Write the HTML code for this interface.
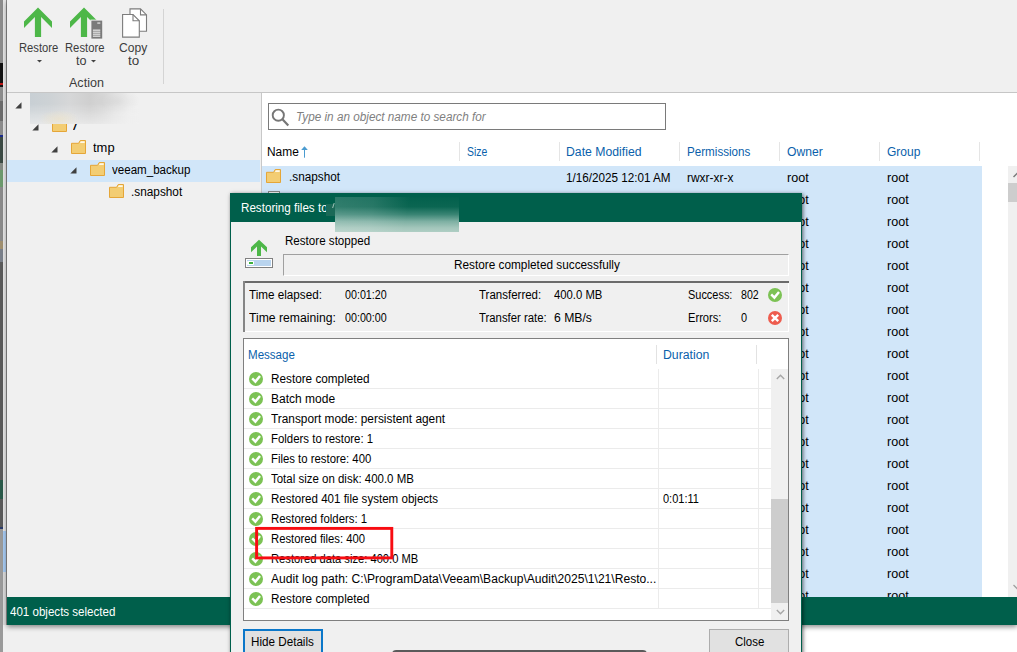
<!DOCTYPE html>
<html><head><meta charset="utf-8"><title>Restore</title>
<style>
html,body{margin:0;padding:0;}
body{width:1017px;height:652px;position:relative;overflow:hidden;background:#f0f0f0;font-family:'Liberation Sans', sans-serif;font-size:12px;}
.a{position:absolute;display:block;}
.t{position:absolute;white-space:pre;transform-origin:0 0;line-height:normal;}
</style></head><body>
<!-- desktop strip on the left -->
<div class="a" style="left:0;top:0;width:3px;height:652px;background:linear-gradient(#8c8c8c 0px,#8c8c8c 63px,#111 63px,#111 83px,#c01818 83px,#c01818 85px,#111 85px,#111 87px,#8c8c8c 87px,#8c8c8c 101px,#6c6c6c 101px,#6c6c6c 121px,#8c8c8c 121px,#8c8c8c 135.5px,#1c2c8c 135.5px,#1c2c8c 137px,#3c4a44 137px,#3c4a44 163px,#858a85 163px,#858a85 170px,#6d9a6d 170px,#6d9a6d 187px,#8a8a8a 187px,#8a8a8a 241px,#a09070 241px,#a09070 249px,#7a808a 249px,#7a808a 262px,#5a5a5a 262px,#5a5a5a 480px,#2a5a4a 480px,#2a5a4a 499.5px,#5a5a5a 499.5px,#5a5a5a 527px,#2a3a6a 527px,#2a3a6a 528.5px,#9a9a9a 528.5px,#9a9a9a 652px)"></div>
<div class="a" style="left:2.6px;top:0;width:3.6px;height:652px;background:linear-gradient(#e6e6e6 0,#e6e6e6 531px,#a8ccf4 531px,#a8ccf4 572px,#dcdcdc 572px,#dcdcdc 652px)"></div>
<div class="a" style="left:6px;top:0;width:1px;height:625px;background:#8e8e8e"></div>
<!-- area under main window -->
<div class="a" style="left:3px;top:625px;width:800px;height:27px;background:#f0f0f0"></div>
<div class="a" style="left:802px;top:625px;width:215px;height:27px;background:#fff"></div>
<!-- main window -->
<div class="a" style="left:7px;top:0;width:1010px;height:625px;background:#f0f0f0;box-shadow:0 2px 5px rgba(0,0,0,.45)"></div>
<div class="a" style="left:7px;top:92px;width:1010px;height:1px;background:#c6c6c6"></div>
<div class="a" style="left:163px;top:9px;width:1px;height:75px;background:#d4d4d4"></div>
<!-- tree selected row -->
<div class="a" style="left:7px;top:159.5px;width:253px;height:22px;background:#d1e6f9"></div>
<!-- right pane -->
<div class="a" style="left:261px;top:93px;width:756px;height:504px;background:#fff;border-left:1px solid #c8c8c8"></div>
<div class="a" style="left:268px;top:103px;width:396px;height:25px;border:1px solid #7a7a7a;background:#fff"></div>
<div class="a" style="left:262px;top:166px;width:720px;height:431px;background:#d1e6f9"></div>
<!-- header separators -->
<div class="a" style="left:459px;top:142px;width:1px;height:19px;background:#e5e5e5"></div><div class="a" style="left:559px;top:142px;width:1px;height:19px;background:#e5e5e5"></div><div class="a" style="left:679px;top:142px;width:1px;height:19px;background:#e5e5e5"></div><div class="a" style="left:779px;top:142px;width:1px;height:19px;background:#e5e5e5"></div><div class="a" style="left:879px;top:142px;width:1px;height:19px;background:#e5e5e5"></div><div class="a" style="left:979px;top:142px;width:1px;height:19px;background:#e5e5e5"></div>
<!-- second row file icon peek -->
<div class="a" style="left:268px;top:191px;width:10px;height:4px;border:1px solid #8a8a8a;background:#fff"></div>
<!-- main scrollbar -->
<div class="a" style="left:1008px;top:166px;width:9px;height:431px;background:#f0f0f0"></div>
<div class="a" style="left:1008px;top:183px;width:9px;height:19px;background:#cdcdcd"></div>
<svg class="a" style="left:1012.5px;top:172px" width="8" height="6" viewBox="0 0 8 6"><path d="M0.5 5L4 1.5L7.5 5" fill="none" stroke="#7a7a7a" stroke-width="1.5"/></svg>
<svg class="a" style="left:1012.5px;top:584px" width="8" height="6" viewBox="0 0 8 6"><path d="M0.5 1L4 4.5L7.5 1" fill="none" stroke="#a0a0a0" stroke-width="1.3"/></svg>
<svg class="a" style="left:23px;top:7px" width="30" height="31" viewBox="0 0 30 31"><path d="M15 0.4L29 14.4V21L18.1 10.1V30H11.9V10.1L1 21V14.4Z" fill="#4db748"/></svg><svg class="a" style="left:68.8px;top:7px" width="30" height="31" viewBox="0 0 30 31"><path d="M15 0.4L29 14.4V21L18.1 10.1V30H11.9V10.1L1 21V14.4Z" fill="#4db748"/></svg><svg class="a" style="left:90px;top:19px" width="14" height="21" viewBox="0 0 14 21"><rect x="0.4" y="0.6" width="12.8" height="20" fill="#f0f0f0"/><rect x="1.4" y="1.6" width="10.8" height="18" fill="#7a7a7a"/><rect x="7.3" y="3.5" width="3" height="1.1" fill="#f0f0f0"/><rect x="2.9" y="10.6" width="7.4" height="1.1" fill="#f6f6f6"/><rect x="2.9" y="12.6" width="7.4" height="1.1" fill="#f6f6f6"/><rect x="2.9" y="14.6" width="7.4" height="1.1" fill="#f6f6f6"/><rect x="2.9" y="16.6" width="7.4" height="1.1" fill="#f6f6f6"/></svg><svg class="a" style="left:122px;top:8px" width="26" height="30" viewBox="0 0 26 30"><path d="M8 0.9H18.5L24.5 6.9V23.2H8Z" fill="#fff" stroke="#7c7c7c" stroke-width="1.1"/><path d="M18.5 0.9V6.9H24.5" fill="none" stroke="#7c7c7c" stroke-width="1.1"/><path d="M0.6 6.5H11L17.3 12.8V29.1H0.6Z" fill="#fff" stroke="#7c7c7c" stroke-width="1.1"/><path d="M11 6.5V12.8H17.3" fill="none" stroke="#7c7c7c" stroke-width="1.1"/></svg><svg class="a" style="left:37.3px;top:60.2px" width="5" height="3" viewBox="0 0 5 3"><path d="M0 0H5L2.5 2.6Z" fill="#444"/></svg><svg class="a" style="left:91.4px;top:60.2px" width="5" height="3" viewBox="0 0 5 3"><path d="M0 0H5L2.5 2.6Z" fill="#444"/></svg><svg class="a" style="left:14.6px;top:101.7px" width="7" height="7" viewBox="0 0 7 7"><path d="M6.5 0.3V6.5H0.3Z" fill="#404040"/></svg><svg class="a" style="left:31.6px;top:123.7px" width="7" height="7" viewBox="0 0 7 7"><path d="M6.5 0.3V6.5H0.3Z" fill="#404040"/></svg><svg class="a" style="left:50.6px;top:145.5px" width="7" height="7" viewBox="0 0 7 7"><path d="M6.5 0.3V6.5H0.3Z" fill="#404040"/></svg><svg class="a" style="left:69.6px;top:167.3px" width="7" height="7" viewBox="0 0 7 7"><path d="M6.5 0.3V6.5H0.3Z" fill="#404040"/></svg><svg class="a" style="left:52px;top:118px" width="15" height="14" viewBox="0 0 15 14"><path d="M0.5 3.3H7.6L9.2 0.5H14.5V13.5H0.5Z" fill="#f3cd73" stroke="#e5a638" stroke-width="1"/><path d="M9.8 1.3H13.7V2.9H8.9Z" fill="#fff8e8"/></svg><svg class="a" style="left:71px;top:140px" width="15" height="14" viewBox="0 0 15 14"><path d="M0.5 3.3H7.6L9.2 0.5H14.5V13.5H0.5Z" fill="#f3cd73" stroke="#e5a638" stroke-width="1"/><path d="M9.8 1.3H13.7V2.9H8.9Z" fill="#fff8e8"/></svg><svg class="a" style="left:90px;top:162px" width="15" height="14" viewBox="0 0 15 14"><path d="M0.5 3.3H7.6L9.2 0.5H14.5V13.5H0.5Z" fill="#f3cd73" stroke="#e5a638" stroke-width="1"/><path d="M9.8 1.3H13.7V2.9H8.9Z" fill="#fff8e8"/></svg><svg class="a" style="left:109px;top:184px" width="15" height="14" viewBox="0 0 15 14"><path d="M0.5 3.3H7.6L9.2 0.5H14.5V13.5H0.5Z" fill="#f3cd73" stroke="#e5a638" stroke-width="1"/><path d="M9.8 1.3H13.7V2.9H8.9Z" fill="#fff8e8"/></svg><svg class="a" style="left:266px;top:169px" width="15" height="14" viewBox="0 0 15 14"><path d="M0.5 3.3H7.6L9.2 0.5H14.5V13.5H0.5Z" fill="#f3cd73" stroke="#e5a638" stroke-width="1"/><path d="M9.8 1.3H13.7V2.9H8.9Z" fill="#fff8e8"/></svg><svg class="a" style="left:270px;top:107px" width="20" height="20" viewBox="0 0 20 20"><circle cx="8.3" cy="8.2" r="5.6" fill="none" stroke="#767676" stroke-width="1.9"/><path d="M12.4 12.3L18.3 18.4" stroke="#767676" stroke-width="2.2" fill="none"/></svg><svg class="a" style="left:301px;top:146px" width="7" height="12" viewBox="0 0 7 12"><path d="M3.5 0.3L6.8 4H0.2Z" fill="#4a9bd0"/><path d="M3.5 3V11.7" stroke="#4a9bd0" stroke-width="1"/></svg>
<span class="t" style="left:18.9px;top:41.0px;color:#3c3c3c;transform:scaleX(0.9350)">Restore</span>
<span class="t" style="left:64.8px;top:41.0px;color:#3c3c3c;transform:scaleX(0.9374)">Restore</span>
<span class="t" style="left:76.0px;top:53.5px;color:#3c3c3c;transform:scaleX(1.0484)">to</span>
<span class="t" style="left:118.8px;top:41.0px;color:#3c3c3c;transform:scaleX(1.0066)">Copy</span>
<span class="t" style="left:127.6px;top:53.5px;color:#3c3c3c;transform:scaleX(1.1183)">to</span>
<span class="t" style="left:68.9px;top:75.7px;color:#3c3c3c;transform:scaleX(1.0462)">Action</span>
<span class="t" style="left:73.3px;top:119.0px;color:#000;transform:scaleX(1.4654)">/</span>
<span class="t" style="left:93.1px;top:141.0px;color:#000;transform:scaleX(1.0792)">tmp</span>
<span class="t" style="left:112.2px;top:163.0px;color:#000;transform:scaleX(0.9645)">veeam_backup</span>
<span class="t" style="left:130.8px;top:185.0px;color:#000;transform:scaleX(0.9837)">.snapshot</span>
<span class="t" style="left:296.3px;top:110.0px;color:#808080;font-style:italic;transform:scaleX(0.9784)">Type in an object name to search for</span>
<span class="t" style="left:266.9px;top:145.0px;color:#000;transform:scaleX(0.9933)">Name</span>
<span class="t" style="left:466.7px;top:145.0px;color:#0a5fab;transform:scaleX(0.8696)">Size</span>
<span class="t" style="left:566.3px;top:145.0px;color:#0a5fab;transform:scaleX(1.0196)">Date Modified</span>
<span class="t" style="left:686.8px;top:145.0px;color:#0a5fab;transform:scaleX(0.9700)">Permissions</span>
<span class="t" style="left:786.5px;top:145.0px;color:#0a5fab;transform:scaleX(1.0101)">Owner</span>
<span class="t" style="left:886.5px;top:145.0px;color:#0a5fab;transform:scaleX(1.0012)">Group</span>
<span class="t" style="left:288.8px;top:170.0px;color:#000;transform:scaleX(0.9818)">.snapshot</span>
<span class="t" style="left:566.3px;top:171.0px;color:#000;transform:scaleX(0.9737)">1/16/2025 12:01 AM</span>
<span class="t" style="left:686.8px;top:171.0px;color:#000;transform:scaleX(0.9945)">rwxr-xr-x</span>
<span class="t" style="left:786.5px;top:171.0px;color:#000;transform:scaleX(1.0489)">root</span>
<span class="t" style="left:886.5px;top:171.0px;color:#000;transform:scaleX(1.0489)">root</span>
<span class="t" style="left:786.5px;top:193.0px;color:#000;transform:scaleX(1.0489)">root</span>
<span class="t" style="left:886.5px;top:193.0px;color:#000;transform:scaleX(1.0489)">root</span>
<span class="t" style="left:786.5px;top:215.0px;color:#000;transform:scaleX(1.0489)">root</span>
<span class="t" style="left:886.5px;top:215.0px;color:#000;transform:scaleX(1.0489)">root</span>
<span class="t" style="left:786.5px;top:237.0px;color:#000;transform:scaleX(1.0489)">root</span>
<span class="t" style="left:886.5px;top:237.0px;color:#000;transform:scaleX(1.0489)">root</span>
<span class="t" style="left:786.5px;top:259.0px;color:#000;transform:scaleX(1.0489)">root</span>
<span class="t" style="left:886.5px;top:259.0px;color:#000;transform:scaleX(1.0489)">root</span>
<span class="t" style="left:786.5px;top:281.0px;color:#000;transform:scaleX(1.0489)">root</span>
<span class="t" style="left:886.5px;top:281.0px;color:#000;transform:scaleX(1.0489)">root</span>
<span class="t" style="left:786.5px;top:303.0px;color:#000;transform:scaleX(1.0489)">root</span>
<span class="t" style="left:886.5px;top:303.0px;color:#000;transform:scaleX(1.0489)">root</span>
<span class="t" style="left:786.5px;top:325.0px;color:#000;transform:scaleX(1.0489)">root</span>
<span class="t" style="left:886.5px;top:325.0px;color:#000;transform:scaleX(1.0489)">root</span>
<span class="t" style="left:786.5px;top:347.0px;color:#000;transform:scaleX(1.0489)">root</span>
<span class="t" style="left:886.5px;top:347.0px;color:#000;transform:scaleX(1.0489)">root</span>
<span class="t" style="left:786.5px;top:369.0px;color:#000;transform:scaleX(1.0489)">root</span>
<span class="t" style="left:886.5px;top:369.0px;color:#000;transform:scaleX(1.0489)">root</span>
<span class="t" style="left:786.5px;top:391.0px;color:#000;transform:scaleX(1.0489)">root</span>
<span class="t" style="left:886.5px;top:391.0px;color:#000;transform:scaleX(1.0489)">root</span>
<span class="t" style="left:786.5px;top:413.0px;color:#000;transform:scaleX(1.0489)">root</span>
<span class="t" style="left:886.5px;top:413.0px;color:#000;transform:scaleX(1.0489)">root</span>
<span class="t" style="left:786.5px;top:435.0px;color:#000;transform:scaleX(1.0489)">root</span>
<span class="t" style="left:886.5px;top:435.0px;color:#000;transform:scaleX(1.0489)">root</span>
<span class="t" style="left:786.5px;top:457.0px;color:#000;transform:scaleX(1.0489)">root</span>
<span class="t" style="left:886.5px;top:457.0px;color:#000;transform:scaleX(1.0489)">root</span>
<span class="t" style="left:786.5px;top:479.0px;color:#000;transform:scaleX(1.0489)">root</span>
<span class="t" style="left:886.5px;top:479.0px;color:#000;transform:scaleX(1.0489)">root</span>
<span class="t" style="left:786.5px;top:501.0px;color:#000;transform:scaleX(1.0489)">root</span>
<span class="t" style="left:886.5px;top:501.0px;color:#000;transform:scaleX(1.0489)">root</span>
<span class="t" style="left:786.5px;top:523.0px;color:#000;transform:scaleX(1.0489)">root</span>
<span class="t" style="left:886.5px;top:523.0px;color:#000;transform:scaleX(1.0489)">root</span>
<span class="t" style="left:786.5px;top:545.0px;color:#000;transform:scaleX(1.0489)">root</span>
<span class="t" style="left:886.5px;top:545.0px;color:#000;transform:scaleX(1.0489)">root</span>
<span class="t" style="left:786.5px;top:567.0px;color:#000;transform:scaleX(1.0489)">root</span>
<span class="t" style="left:886.5px;top:567.0px;color:#000;transform:scaleX(1.0489)">root</span>
<span class="t" style="left:786.5px;top:589.0px;color:#000;transform:scaleX(1.0489)">root</span>
<span class="t" style="left:886.5px;top:589.0px;color:#000;transform:scaleX(1.0489)">root</span>
<!-- blurred host name in tree -->
<div class="a" style="left:30px;top:92.5px;width:109px;height:31.5px;background:radial-gradient(ellipse 20px 9px at 29px 26px,rgba(238,226,196,.6),rgba(238,224,190,0)),linear-gradient(180deg,rgba(240,240,240,0) 0,rgba(240,240,240,0) 35%,rgba(240,240,240,.72) 100%),radial-gradient(ellipse 22px 12px at 88px 8px,rgba(0,0,0,.045),rgba(0,0,0,0)),linear-gradient(90deg,#c8cfd4 0,#cdd2d5 18%,#d6d7d8 36%,#cfcfcf 55%,#d6d6d6 66%,#e4e4e4 78%,#eeeeee 90%,#f0f0f0 100%)"></div>
<!-- status bar -->
<div class="a" style="left:7px;top:597px;width:1010px;height:28px;background:#005f4b"></div>
<span class="t" style="left:10.3px;top:605.0px;color:#fff;transform:scaleX(0.9634)">401 objects selected</span>
<!-- dialog -->
<div class="a" style="left:230px;top:193px;width:570px;height:470px;background:#f0f0f0;border:1px solid #005f4b;box-shadow:1px 1px 4px rgba(0,0,0,.6)"></div>
<div class="a" style="left:230px;top:193px;width:572px;height:29px;background:#005f4b"></div>
<!-- progress box -->
<div class="a" style="left:283px;top:254px;width:505px;height:21px;border-top:1px solid #a0a0a0;border-left:1px solid #a0a0a0;border-right:1px solid #fff;border-bottom:1px solid #fff;box-sizing:border-box;width:506px;height:22px"></div>
<!-- stats panel -->
<div class="a" style="left:243px;top:281px;width:546px;height:2px;background:#6b6b6b"></div><div class="a" style="left:243px;top:281px;width:2px;height:50.6px;background:#858585"></div><div class="a" style="left:788px;top:283px;width:1px;height:48.6px;background:#fff"></div><div class="a" style="left:245px;top:330.6px;width:544px;height:1px;background:#fff"></div>
<!-- list box -->
<div class="a" style="left:243px;top:338px;width:546px;height:283px;box-sizing:border-box;background:#fff;border:1px solid #7f7f7f"></div>
<div class="a" style="left:656px;top:345px;width:1px;height:19px;background:#e2e2e2"></div>
<div class="a" style="left:756px;top:345px;width:1px;height:19px;background:#e2e2e2"></div>
<div class="a" style="left:244px;top:388px;width:527px;height:1px;background:#ebebeb"></div><div class="a" style="left:244px;top:408px;width:527px;height:1px;background:#ebebeb"></div><div class="a" style="left:244px;top:428px;width:527px;height:1px;background:#ebebeb"></div><div class="a" style="left:244px;top:448px;width:527px;height:1px;background:#ebebeb"></div><div class="a" style="left:244px;top:468px;width:527px;height:1px;background:#ebebeb"></div><div class="a" style="left:244px;top:488px;width:527px;height:1px;background:#ebebeb"></div><div class="a" style="left:244px;top:508px;width:527px;height:1px;background:#ebebeb"></div><div class="a" style="left:244px;top:528px;width:527px;height:1px;background:#ebebeb"></div><div class="a" style="left:244px;top:548px;width:527px;height:1px;background:#ebebeb"></div><div class="a" style="left:244px;top:568px;width:527px;height:1px;background:#ebebeb"></div><div class="a" style="left:244px;top:588px;width:527px;height:1px;background:#ebebeb"></div><div class="a" style="left:244px;top:608px;width:527px;height:1px;background:#ebebeb"></div><div class="a" style="left:658px;top:369px;width:1px;height:240px;background:#ebebeb"></div><div class="a" style="left:758px;top:369px;width:1px;height:240px;background:#ebebeb"></div>
<!-- dialog scrollbar -->
<div class="a" style="left:771px;top:369px;width:17px;height:251px;background:#f0f0f0"></div>
<div class="a" style="left:771px;top:499px;width:17px;height:104px;background:#cdcdcd"></div>
<svg class="a" style="left:776px;top:374.4px" width="9" height="6" viewBox="0 0 9 6"><path d="M0.8 5L4.5 1.3L8.2 5" fill="none" stroke="#a6a6a6" stroke-width="1.4"/></svg>
<svg class="a" style="left:776px;top:609px" width="9" height="6" viewBox="0 0 9 6"><path d="M0.8 1L4.5 4.7L8.2 1" fill="none" stroke="#a6a6a6" stroke-width="1.4"/></svg>
<!-- buttons -->
<div class="a" style="left:243px;top:629px;width:80px;height:30px;box-sizing:border-box;background:#e1e1e1;border:2px solid #0b77c9"></div>
<div class="a" style="left:709px;top:629px;width:80px;height:30px;box-sizing:border-box;background:#e1e1e1;border:1px solid #adadad"></div>
<svg class="a" style="left:250px;top:239px" width="18" height="18" viewBox="0 0 18 18"><path d="M9 0.7L17 8.2V13.3L11 7.6V17H7V7.6L1 13.3V8.2Z" fill="#4db748"/></svg><div class="a" style="left:245px;top:258px;width:26px;height:8px;border:1px solid #808080;background:#fff"></div><div class="a" style="left:247px;top:260px;width:24px;height:6px;background:#b9d4ee"></div><div class="a" style="left:247.3px;top:260.8px;width:6.8px;height:4.4px;background:#fff;border-radius:1px"></div><div class="a" style="left:248.9px;top:262.2px;width:4px;height:1.6px;background:#3db03d"></div><svg class="a" style="left:768px;top:288px" width="14" height="14" viewBox="0 0 14 14"><circle cx="7" cy="7" r="7" fill="#7cc254"/><path d="M3.2 6.4L6.4 9.6L11 4" fill="none" stroke="#fff" stroke-width="2.4"/></svg><svg class="a" style="left:768px;top:311px" width="14" height="14" viewBox="0 0 14 14"><circle cx="7" cy="7" r="7" fill="#ee5c4e"/><path d="M3.8 3.8L10.2 10.2M10.2 3.8L3.8 10.2" fill="none" stroke="#fff" stroke-width="2.4"/></svg><svg class="a" style="left:249px;top:372px" width="14" height="14" viewBox="0 0 14 14"><circle cx="7" cy="7" r="7" fill="#7cc254"/><path d="M3.2 6.4L6.4 9.6L11 4" fill="none" stroke="#fff" stroke-width="2.4"/></svg><svg class="a" style="left:249px;top:392px" width="14" height="14" viewBox="0 0 14 14"><circle cx="7" cy="7" r="7" fill="#7cc254"/><path d="M3.2 6.4L6.4 9.6L11 4" fill="none" stroke="#fff" stroke-width="2.4"/></svg><svg class="a" style="left:249px;top:412px" width="14" height="14" viewBox="0 0 14 14"><circle cx="7" cy="7" r="7" fill="#7cc254"/><path d="M3.2 6.4L6.4 9.6L11 4" fill="none" stroke="#fff" stroke-width="2.4"/></svg><svg class="a" style="left:249px;top:432px" width="14" height="14" viewBox="0 0 14 14"><circle cx="7" cy="7" r="7" fill="#7cc254"/><path d="M3.2 6.4L6.4 9.6L11 4" fill="none" stroke="#fff" stroke-width="2.4"/></svg><svg class="a" style="left:249px;top:452px" width="14" height="14" viewBox="0 0 14 14"><circle cx="7" cy="7" r="7" fill="#7cc254"/><path d="M3.2 6.4L6.4 9.6L11 4" fill="none" stroke="#fff" stroke-width="2.4"/></svg><svg class="a" style="left:249px;top:472px" width="14" height="14" viewBox="0 0 14 14"><circle cx="7" cy="7" r="7" fill="#7cc254"/><path d="M3.2 6.4L6.4 9.6L11 4" fill="none" stroke="#fff" stroke-width="2.4"/></svg><svg class="a" style="left:249px;top:492px" width="14" height="14" viewBox="0 0 14 14"><circle cx="7" cy="7" r="7" fill="#7cc254"/><path d="M3.2 6.4L6.4 9.6L11 4" fill="none" stroke="#fff" stroke-width="2.4"/></svg><svg class="a" style="left:249px;top:512px" width="14" height="14" viewBox="0 0 14 14"><circle cx="7" cy="7" r="7" fill="#7cc254"/><path d="M3.2 6.4L6.4 9.6L11 4" fill="none" stroke="#fff" stroke-width="2.4"/></svg><svg class="a" style="left:249px;top:532px" width="14" height="14" viewBox="0 0 14 14"><circle cx="7" cy="7" r="7" fill="#7cc254"/><path d="M3.2 6.4L6.4 9.6L11 4" fill="none" stroke="#fff" stroke-width="2.4"/></svg><svg class="a" style="left:249px;top:552px" width="14" height="14" viewBox="0 0 14 14"><circle cx="7" cy="7" r="7" fill="#7cc254"/><path d="M3.2 6.4L6.4 9.6L11 4" fill="none" stroke="#fff" stroke-width="2.4"/></svg><svg class="a" style="left:249px;top:572px" width="14" height="14" viewBox="0 0 14 14"><circle cx="7" cy="7" r="7" fill="#7cc254"/><path d="M3.2 6.4L6.4 9.6L11 4" fill="none" stroke="#fff" stroke-width="2.4"/></svg><svg class="a" style="left:249px;top:592px" width="14" height="14" viewBox="0 0 14 14"><circle cx="7" cy="7" r="7" fill="#7cc254"/><path d="M3.2 6.4L6.4 9.6L11 4" fill="none" stroke="#fff" stroke-width="2.4"/></svg>
<span class="t" style="left:240.8px;top:201.0px;color:#fff;transform:scaleX(0.9690)">Restoring files to</span>
<span class="t" style="left:284.8px;top:234.0px;color:#000;transform:scaleX(0.9664)">Restore stopped</span>
<span class="t" style="left:453.5px;top:258.2px;color:#000;transform:scaleX(0.9831)">Restore completed successfully</span>
<span class="t" style="left:248.8px;top:288.0px;color:#000;transform:scaleX(0.9728)">Time elapsed:</span>
<span class="t" style="left:344.5px;top:288.0px;color:#000;transform:scaleX(0.8926)">00:01:20</span>
<span class="t" style="left:248.8px;top:311.0px;color:#000;transform:scaleX(1.0153)">Time remaining:</span>
<span class="t" style="left:344.5px;top:311.0px;color:#000;transform:scaleX(0.8926)">00:00:00</span>
<span class="t" style="left:478.8px;top:288.0px;color:#000;transform:scaleX(0.9581)">Transferred:</span>
<span class="t" style="left:554.3px;top:288.0px;color:#000;transform:scaleX(0.9421)">400.0 MB</span>
<span class="t" style="left:478.8px;top:311.0px;color:#000;transform:scaleX(0.9444)">Transfer rate:</span>
<span class="t" style="left:554.3px;top:311.0px;color:#000;transform:scaleX(1.0149)">6 MB/s</span>
<span class="t" style="left:688.3px;top:288.0px;color:#000;transform:scaleX(0.9119)">Success:</span>
<span class="t" style="left:740.5px;top:288.0px;color:#000;transform:scaleX(0.8836)">802</span>
<span class="t" style="left:688.3px;top:311.0px;color:#000;transform:scaleX(0.9278)">Errors:</span>
<span class="t" style="left:740.5px;top:311.0px;color:#000;transform:scaleX(0.9121)">0</span>
<span class="t" style="left:248.3px;top:348.0px;color:#0a5fab;transform:scaleX(0.9630)">Message</span>
<span class="t" style="left:663.3px;top:348.0px;color:#0a5fab;transform:scaleX(1.0229)">Duration</span>
<span class="t" style="left:271.1px;top:372.0px;color:#000;transform:scaleX(0.9790)">Restore completed</span>
<span class="t" style="left:271.1px;top:392.0px;color:#000;transform:scaleX(1.0008)">Batch mode</span>
<span class="t" style="left:271.1px;top:412.0px;color:#000;transform:scaleX(0.9874)">Transport mode: persistent agent</span>
<span class="t" style="left:271.1px;top:432.0px;color:#000;transform:scaleX(0.9507)">Folders to restore: 1</span>
<span class="t" style="left:271.1px;top:452.0px;color:#000;transform:scaleX(0.9457)">Files to restore: 400</span>
<span class="t" style="left:271.1px;top:472.0px;color:#000;transform:scaleX(0.9564)">Total size on disk: 400.0 MB</span>
<span class="t" style="left:271.1px;top:492.0px;color:#000;transform:scaleX(0.9635)">Restored 401 file system objects</span>
<span class="t" style="left:663.3px;top:492.0px;color:#000;transform:scaleX(0.9168)">0:01:11</span>
<span class="t" style="left:271.1px;top:512.0px;color:#000;transform:scaleX(0.9478)">Restored folders: 1</span>
<span class="t" style="left:271.1px;top:532.0px;color:#000;transform:scaleX(0.9404)">Restored files: 400</span>
<span class="t" style="left:271.1px;top:552.0px;color:#000;transform:scaleX(0.9317)">Restored data size: 400.0 MB</span>
<span class="t" style="left:271.1px;top:572.0px;color:#000;transform:scaleX(1.0063)">Audit log path: C:\ProgramData\Veeam\Backup\Audit\2025\1\21\Resto...</span>
<span class="t" style="left:271.1px;top:592.0px;color:#000;transform:scaleX(0.9790)">Restore completed</span>
<span class="t" style="left:251.3px;top:635.0px;color:#000;transform:scaleX(0.9721)">Hide Details</span>
<span class="t" style="left:734.8px;top:635.0px;color:#000;transform:scaleX(0.9580)">Close</span>
<!-- blurred target name in title -->
<div class="a" style="left:325.7px;top:204px;width:10px;height:12px;background:#1b6957"></div>
<div class="a" style="left:332.6px;top:203px;width:1.4px;height:4.5px;background:#9fc3b8;transform:skewX(-18deg)"></div>
<div class="a" style="left:335px;top:197px;width:124px;height:35px;background:linear-gradient(100deg,rgba(255,255,255,.16) 0,rgba(255,255,255,.12) 30%,rgba(255,255,255,0) 58%),linear-gradient(180deg,#03604c 0,#0b6652 28%,#3a8574 50%,#7eb0a3 70%,#a3c6bb 88%,#afcec4 100%)"></div>
<!-- red highlight -->
<svg class="a" style="left:250px;top:520px" width="150" height="45" viewBox="250 520 150 45"><rect x="256.6" y="528.4" width="135.2" height="29.5" fill="none" stroke="#f80c12" stroke-width="2.9"/></svg>
<!-- bottom dark bar -->
<div class="a" style="left:392px;top:650px;width:255px;height:8px;border-radius:5px;background:#5a5a5a"></div>
</body></html>
